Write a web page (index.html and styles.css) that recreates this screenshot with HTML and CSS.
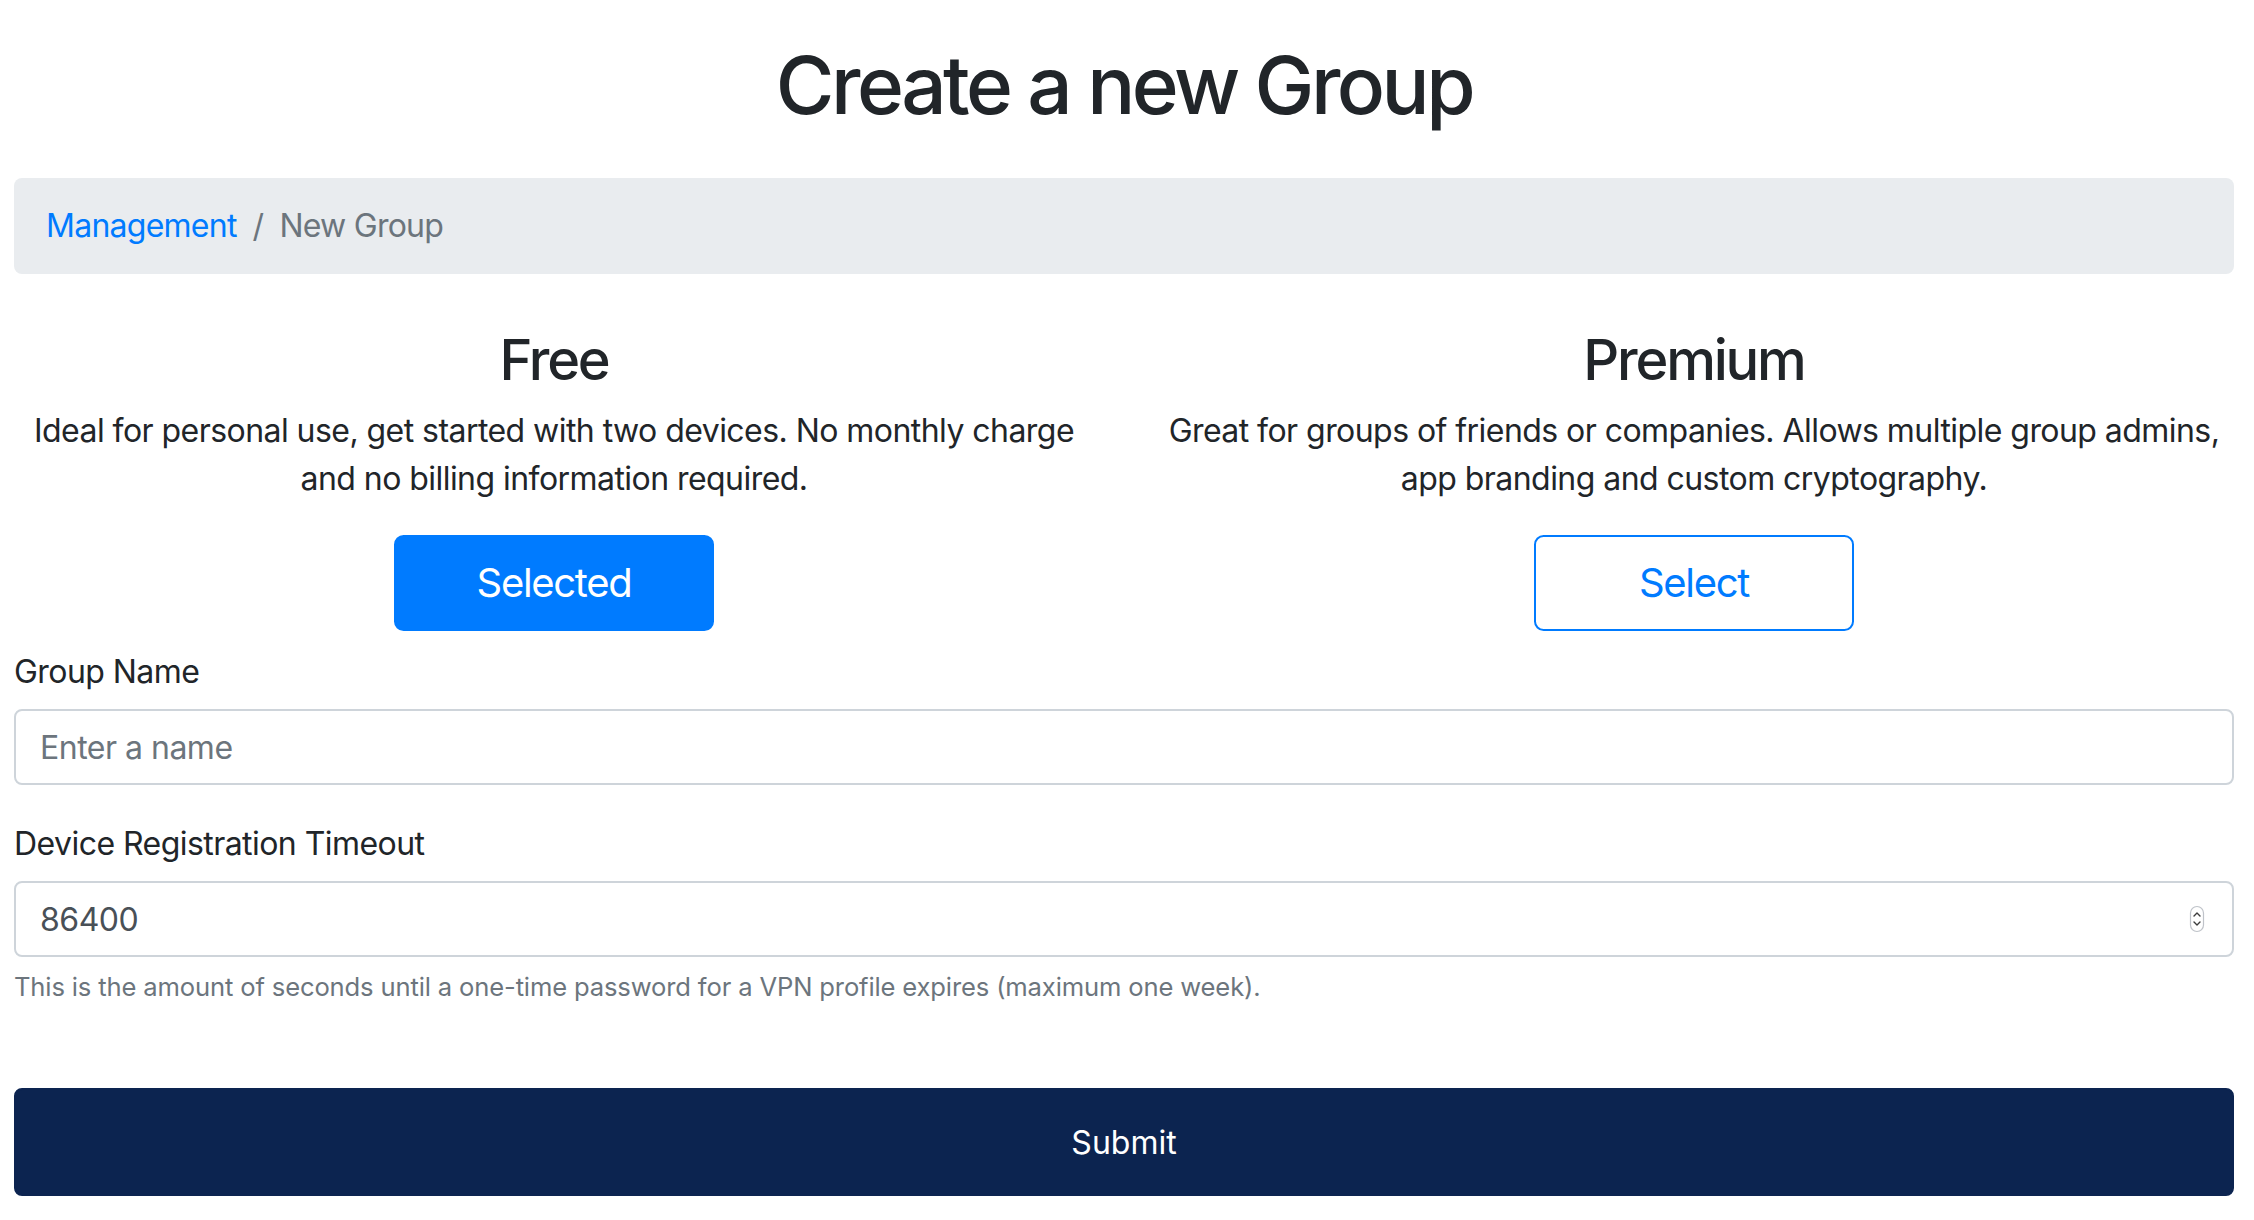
FILE: index.html
```html
<!DOCTYPE html>
<html lang="en">
<head>
<meta charset="utf-8">
<title>Create a new Group</title>
<link rel="stylesheet" href="styles.css">
</head>
<body>
<div class="container">
  <h1 class="title">Create a new Group</h1>
  <nav class="breadcrumb">
    <a class="crumb-link" href="#">Management</a>
    <span class="crumb-sep">/</span>
    <span class="crumb-active">New Group</span>
  </nav>
  <div class="plans">
    <div class="plan">
      <h3 class="plan-title">Free</h3>
      <p class="plan-desc">Ideal for personal use, get started with two devices. No monthly charge and no billing information required.</p>
      <button class="btn-plan btn-selected" type="button">Selected</button>
    </div>
    <div class="plan">
      <h3 class="plan-title">Premium</h3>
      <p class="plan-desc">Great for groups of friends or companies. Allows multiple group admins, app branding and custom cryptography.</p>
      <button class="btn-plan btn-outline" type="button">Select</button>
    </div>
  </div>
  <form class="form">
    <div class="group group-first">
      <label class="label" for="gname">Group Name</label>
      <input class="control" id="gname" type="text" placeholder="Enter a name">
    </div>
    <div class="group group-second">
      <label class="label" for="timeout">Device Registration Timeout</label>
      <div class="num-wrap">
        <input class="control control-value" id="timeout" type="text" value="86400">
        <span class="spinner">
          <svg width="16" height="28" viewBox="0 0 16 28"><rect x="1.5" y="1.5" width="13" height="25" rx="6.5" fill="#fff" stroke="#bfc3c9" stroke-width="1.2"/><polyline points="5,11 8,8 11,11" fill="none" stroke="#3c3c3c" stroke-width="1.4" stroke-linecap="round" stroke-linejoin="round"/><polyline points="5,17 8,20 11,17" fill="none" stroke="#3c3c3c" stroke-width="1.4" stroke-linecap="round" stroke-linejoin="round"/></svg>
        </span>
      </div>
      <small class="help">This is the amount of seconds until a one-time password for a VPN profile expires (maximum one week).</small>
    </div>
    <button class="submit" type="submit">Submit</button>
  </form>
</div>
</body>
</html>
```
FILE: styles.css
```css
html, body {
  margin: 0;
  padding: 0;
  overflow-x: hidden;
  background: #fff;
}
body {
  font-family: Inter, "Liberation Sans", sans-serif;
  font-size: 32px;
  line-height: 1.5;
  color: #212529;
  letter-spacing: -0.55px;
}
.container {
  margin: 0 20px 0 14px;
}
.title {
  margin: 0;
  padding-top: 37px;
  margin-bottom: 45px;
  font-size: 80px;
  line-height: 96px;
  font-weight: 500;
  letter-spacing: -3.5px;
  text-align: center;
  color: #212529;
}
.breadcrumb {
  display: flex;
  align-items: center;
  height: 96px;
  box-sizing: border-box;
  padding: 0 32px;
  background: #e9ecef;
  border-radius: 8px;
  letter-spacing: -0.75px;
}
.crumb-link {
  color: #007bff;
  text-decoration: none;
}
.crumb-sep {
  padding: 0 16px;
  color: #6c757d;
}
.crumb-active {
  color: #6c757d;
}
.plans {
  display: grid;
  grid-template-columns: 1fr 1fr;
  margin: 53px -30px 17px -30px;
}
.plan {
  padding: 0 30px;
  text-align: center;
}
.plan-title {
  margin: 0 0 13px;
  font-size: 56px;
  line-height: 67px;
  font-weight: 500;
  letter-spacing: -2.2px;
}
.plan-desc {
  margin: 0 0 32px;
}
.btn-plan {
  width: 320px;
  height: 96px;
  font-family: inherit;
  font-size: 40px;
  line-height: 60px;
  letter-spacing: -1.3px;
  border: 2px solid #007bff;
  border-radius: 9.6px;
  cursor: pointer;
}
.btn-selected {
  background: #007bff;
  color: #fff;
}
.btn-outline {
  background: #fff;
  color: #007bff;
}
.label {
  display: block;
  margin-bottom: 13px;
}
.group-second {
  margin-top: 35px;
}
.num-wrap {
  position: relative;
}
.control {
  display: block;
  width: 100%;
  height: 76px;
  box-sizing: border-box;
  padding: 0 24px;
  font-family: inherit;
  font-size: 32px;
  letter-spacing: -0.5px;
  color: #495057;
  background: #fff;
  border: 2px solid #ced4da;
  border-radius: 8px;
  outline: none;
}
.control::placeholder {
  color: #6c757d;
}
.spinner {
  position: absolute;
  right: 29px;
  top: 24px;
  width: 16px;
  height: 28px;
  display: block;
}
.spinner svg {
  display: block;
}
.help {
  display: block;
  margin-top: 11px;
  font-size: 25.6px;
  line-height: 38.4px;
  letter-spacing: -0.15px;
  color: #6c757d;
}
.submit {
  display: block;
  width: 100%;
  margin-top: 82px;
  height: 108px;
  font-family: inherit;
  font-size: 32px;
  letter-spacing: 0;
  color: #fff;
  background: #0c2450;
  border: 2px solid #0c2450;
  border-radius: 8px;
  cursor: pointer;
  box-shadow: 0 14px 10px -6px rgba(0,0,0,0.02);
}
```
